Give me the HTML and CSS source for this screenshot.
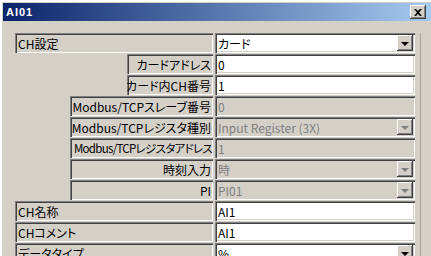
FILE: index.html
```html
<!DOCTYPE html>
<html lang="ja">
<head>
  <meta charset="UTF-8" />
  <title>AI01</title>
  <link rel="stylesheet" href="styles.css">
</head>
<body>
  <div class="window">
    <div class="titlebar">
      <span class="title">AI01</span>
      <span class="close">
        <svg width="8" height="7" viewBox="0 0 8 7"><path d="M0 0h2l2 2 2-2h2L5 3.5 8 7H6L4 5 2 7H0l3-3.5z" fill="#000"/></svg>
      </span>
    </div>

    <div class="client">
      <div class="form">
        <div class="row">
          <div class="label">CH設定</div>
          <div class="field">カード<span class="drop"><i class="arrow"></i></span></div>
        </div>
        <div class="row">
          <div class="label lv1 right">カードアドレス</div>
          <div class="field">0</div>
        </div>
        <div class="row">
          <div class="label lv1 right">カード内CH番号</div>
          <div class="field">1</div>
        </div>
        <div class="row">
          <div class="label lv2 right">Modbus/TCPスレーブ番号</div>
          <div class="field off">0</div>
        </div>
        <div class="row">
          <div class="label lv2 right">Modbus/TCPレジスタ種別</div>
          <div class="field off">Input Register (3X)<span class="drop"><i class="arrow"></i></span></div>
        </div>
        <div class="row">
          <div class="label lv2 right fit">Modbus/TCPレジスタアドレス</div>
          <div class="field off">1</div>
        </div>
        <div class="row">
          <div class="label lv2 right">時刻入力</div>
          <div class="field off">時<span class="drop"><i class="arrow"></i></span></div>
        </div>
        <div class="row">
          <div class="label lv2 right">PI</div>
          <div class="field off">PI01<span class="drop"><i class="arrow"></i></span></div>
        </div>
        <div class="row">
          <div class="label">CH名称</div>
          <div class="field">AI1</div>
        </div>
        <div class="row">
          <div class="label">CHコメント</div>
          <div class="field">AI1</div>
        </div>
        <div class="row">
          <div class="label">データタイプ</div>
          <div class="field">%<span class="drop"><i class="arrow"></i></span></div>
        </div>
      </div>
      <div class="scroll"></div>
    </div>
  </div>
</body>
</html>
```

FILE: styles.css
```css
body {
  margin: 0;
  background: #d4d0c8;
  font-family: "Liberation Sans Narrow", "Noto Sans CJK JP", sans-serif;
  font-size: 12px;
  color: #000;
}

.window {
  height: 256px;
  overflow: hidden;
  box-sizing: border-box;
  padding: 3px 0 0 3px;
  box-shadow: inset 2px 2px 0 #fff, inset 1px 1px 0 #d4d0c8;
}

.titlebar {
  height: 18px;
  display: flex;
  align-items: center;
  padding: 0 5px 0 3px;
  background: linear-gradient(to right, #0a246a, #a6caf0);
}

.title {
  font-family: "Liberation Sans", sans-serif;
  font-weight: bold;
  font-size: 11px;
  letter-spacing: 1px;
  color: #fff;
}

.close {
  margin-left: auto;
  width: 16px;
  height: 14px;
  display: flex;
  align-items: center;
  justify-content: center;
  background: #d4d0c8;
  box-shadow: inset -1px -1px 0 #404040, inset 1px 1px 0 #fff, inset -2px -2px 0 #808080;
}

.client {
  display: flex;
  height: 100%;
  padding: 12px 0 0 12px;
}

.form {
  width: 400px;
  display: flex;
  flex-direction: column;
  gap: 1px;
}

.scroll {
  margin-left: 5px;
  border-left: 1px solid #a8a49c;
}

.row {
  display: flex;
  gap: 2px;
  height: 20px;
  flex-shrink: 0;
}

.label, .field {
  box-sizing: border-box;
  display: flex;
  align-items: center;
  white-space: nowrap;
  overflow: hidden;
  font-feature-settings: "palt";
  box-shadow: inset 1px 1px 0 #808080, inset 2px 2px 0 #404040, inset -1px -1px 0 #fff, inset -2px -2px 0 #d4d0c8;
}

.label {
  flex: 1;
  padding: 0 2px 0 3px;
}

.label.right {
  justify-content: flex-end;
}

.label.fit {
  padding: 0 1px 0 2px;
  font-size: 11.5px;
  letter-spacing: -0.7px;
}

.lv1 {
  margin-left: 112px;
}

.lv2 {
  margin-left: 55px;
}

.field {
  width: 200px;
  padding: 0 2px 0 3px;
  background: #fff;
}

.field.off {
  background: #d4d0c8;
  color: #808080;
}

.drop {
  margin-left: auto;
  width: 16px;
  height: 16px;
  flex-shrink: 0;
  display: flex;
  align-items: center;
  justify-content: center;
  background: #d4d0c8;
  box-shadow: inset -1px -1px 0 #404040, inset 1px 1px 0 #fff, inset -2px -2px 0 #808080;
}

.arrow {
  width: 0;
  height: 0;
  border-left: 4px solid transparent;
  border-right: 4px solid transparent;
  border-top: 4px solid #000;
  margin-top: 1px;
}

.off .arrow {
  border-top-color: #808080;
}
```
